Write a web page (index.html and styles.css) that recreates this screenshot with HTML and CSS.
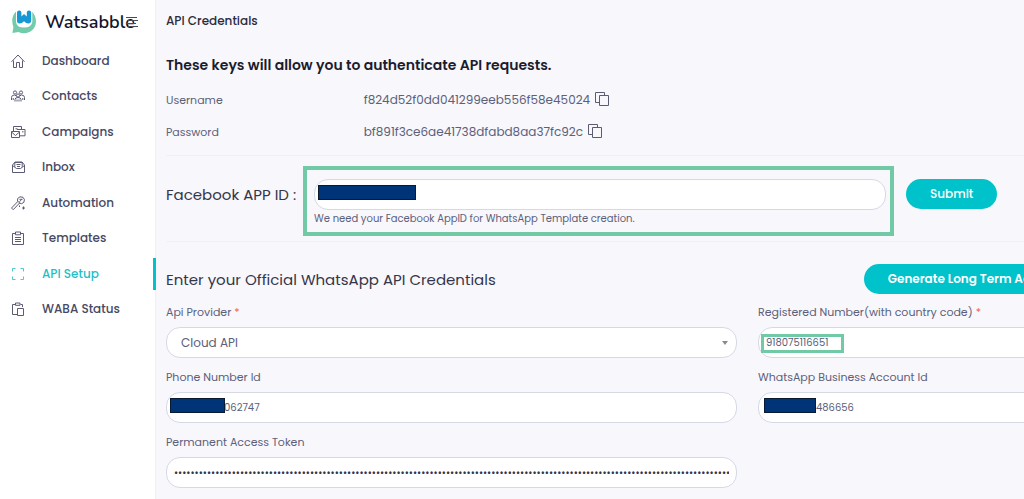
FILE: index.html
```html
<!DOCTYPE html>
<html lang="en">
<head>
    <meta charset="UTF-8">
    <title>API Credentials</title>
    <link rel="stylesheet" href="styles.css">
</head>
<body>
    <aside class="sidebar">
        <div class="brand">
            <svg class="logo" viewBox="0 0 24 24">
                <path d="M3.5 2 Q0 6 0.3 11 Q0.3 14 1.4 17 L0.4 23 L6.5 22 Q9 23.2 12 23.2 C19 23.2 24 18 24 11.5 C24 7 22 4 20.5 2Z" fill="#72cbaa"/>
                <path d="M4 0 H20.3 V12 Q19.5 17.5 12 17.5 T4 12Z" fill="#fff"/>
                <path d="M5 2.6 Q5 .6 7.2 .6 T9.4 2.6 V6.5 L12 4 L14.8 6.5 V2.6 Q14.8 .6 17 .6 T19.2 2.6 V10.5 Q19 13.5 16.5 13.5 Q14 13.5 12 11.3 Q10 13.5 7.5 13.5 Q5 13.5 5 10.5Z" fill="#1897d5"/>
            </svg>
            <span class="brand-name">Watsabble</span>
            <button class="menu-toggle" aria-label="Menu">
                <svg viewBox="0 0 12 10"><path d="M0 .5h11M2 3.5h10M0 6.5h10M2 9.5h10"/></svg>
            </button>
        </div>
        <nav class="menu">
            <a href="#" class="menu-item">
                <svg class="icon" viewBox="0 0 16 16"><path d="M1.5 8.8 8 2l6.5 6.8M3.5 7.5v7h3V9.5h3v5h3v-7"/></svg>
                Dashboard
            </a>
            <a href="#" class="menu-item">
                <svg class="icon" viewBox="0 0 16 16"><circle cx="5" cy="4.5" r="1.6"/><circle cx="11" cy="4.5" r="1.6"/><circle cx="8" cy="7.5" r="1.6"/><path d="M1.5 12V9.5q0-2.5 3-2.5l2 1M14.5 12V9.5q0-2.5-3-2.5l-2 1M5 13.5v-2q0-2 3-2t3 2v2M3.2 12v-2M12.8 12v-2M7 13.5v-2M9 13.5v-2"/></svg>
                Contacts
            </a>
            <a href="#" class="menu-item">
                <svg class="icon" viewBox="0 0 16 16"><path d="M3.5 7V2.5h8V5M7 5.5h8v6.3H9.5M1.5 7.5h8v6h-8zM1.5 8l4 3.5 4-3.5M12 7.8h1.5M5.5 4.8h2"/></svg>
                Campaigns
            </a>
            <a href="#" class="menu-item">
                <svg class="icon" viewBox="0 0 16 16"><path d="M2.5 6v7.5h12V6L12 3H5zM2.5 6.5 6.5 9.5h4l4-3M4.8 7.8V3.5h7.4v4.3M6.5 5.5h4M7 7.5h3"/></svg>
                Inbox
            </a>
            <a href="#" class="menu-item">
                <svg class="icon" viewBox="0 0 16 16"><path d="m1.5 13 6.5-6.7 1.6 1.7L3.2 14.7zM7.5 6.3l.2-2.8L10 1.8l3 .5 1.4 2.2-.5 2.8-2.3 1.4-2.4-.7M9.5 6.8l2.3-2.6M9.5 4.3h3M13.5 11.5v3M12 13h3M9.5 10.5v1.5"/></svg>
                Automation
            </a>
            <a href="#" class="menu-item">
                <svg class="icon" viewBox="0 0 16 16"><path d="M5.5 3.5h-3v11h11v-11h-3M5.5 2h5v2.8h-5zM5 7.5h6M5 9.5h6M5 11.5h6"/></svg>
                Templates
            </a>
            <a href="#" class="menu-item active">
                <svg class="icon" viewBox="0 0 16 16"><path d="M2.5 5.5v-3h3M10.5 2.5h3v3M13.5 10.5v3h-3M5.5 13.5h-3v-3"/></svg>
                API Setup
            </a>
            <a href="#" class="menu-item">
                <svg class="icon" viewBox="0 0 16 16"><path d="M5 3.5H2.5v10H7M10.5 3.5h2V6M5.5 2h4.5v2.3H5.5zM7.5 7.5h6v7h-6z"/></svg>
                WABA Status
            </a>
        </nav>
    </aside>

    <main class="content">
        <div class="page">
            <h1 class="page-title">API Credentials</h1>

            <h2 class="keys-title">These keys will allow you to authenticate API requests.</h2>
            <dl class="keys">
                <div class="key-row">
                    <dt>Username</dt>
                    <dd>
                        f824d52f0dd041299eeb556f58e45024
                        <button class="copy" aria-label="Copy username">
                            <svg viewBox="0 0 14 14"><path d="M4.5 10.5h-4V.5h9V3M4.5 3.5h9v10h-9z"/></svg>
                        </button>
                    </dd>
                </div>
                <div class="key-row">
                    <dt>Password</dt>
                    <dd>
                        bf891f3ce6ae41738dfabd8aa37fc92c
                        <button class="copy" aria-label="Copy password">
                            <svg viewBox="0 0 14 14"><path d="M4.5 10.5h-4V.5h9V3M4.5 3.5h9v10h-9z"/></svg>
                        </button>
                    </dd>
                </div>
            </dl>

            <form class="app-form">
                <label for="app-id" class="app-label">Facebook APP ID :</label>
                <div class="app-box">
                    <div class="control">
                        <input type="text" id="app-id">
                        <span class="mask mask-app"></span>
                    </div>
                    <small>We need your Facebook AppID for WhatsApp Template creation.</small>
                </div>
                <button type="button" class="btn">Submit</button>
            </form>

            <div class="section-head">
                <h3>Enter your Official WhatsApp API Credentials</h3>
                <button type="button" class="btn btn-wide">Generate Long Term Access Token</button>
            </div>

            <form class="credentials">
                <div class="field">
                    <label for="provider">Api Provider <span class="required">*</span></label>
                    <div class="control select">
                        <select id="provider">
                            <option>Cloud API</option>
                        </select>
                    </div>
                </div>
                <div class="field">
                    <label for="number">Registered Number(with country code) <span class="required">*</span></label>
                    <div class="control">
                        <input type="text" id="number" value="918075116651">
                        <span class="highlight"></span>
                    </div>
                </div>
                <div class="field">
                    <label for="phone-id">Phone Number Id</label>
                    <div class="control">
                        <input type="text" id="phone-id" class="masked" value="062747">
                        <span class="mask mask-phone"></span>
                    </div>
                </div>
                <div class="field">
                    <label for="account-id">WhatsApp Business Account Id</label>
                    <div class="control">
                        <input type="text" id="account-id" class="masked" value="486656">
                        <span class="mask mask-account"></span>
                    </div>
                </div>
                <div class="field">
                    <label for="token">Permanent Access Token</label>
                    <div class="control">
                        <input type="password" id="token" value="0000000000000000000000000000000000000000000000000000000000000000000000000000000000000000000000000000000000000000000000000000000000000000000000000000000000000000000000000000000000000000">
                    </div>
                </div>
            </form>
        </div>
    </main>
</body>
</html>
```

FILE: styles.css
```css
* {
    box-sizing: border-box;
}
body {
    margin: 0;
    min-height: 100vh;
    display: flex;
    font-family: Poppins, Inter, sans-serif;
    font-size: 12px;
    color: #5c6079;
    background-color: #f8f7fc;
}
h1, h2, h3, dl, dd {
    margin: 0;
}
button {
    font-family: inherit;
    cursor: pointer;
}
svg {
    display: block;
    fill: none;
    stroke: currentColor;
}

/* sidebar */
.sidebar {
    flex: none;
    width: 156px;
    background-color: #fff;
    border-right: 1px solid #f0f0f4;
}
.brand {
    display: flex;
    align-items: center;
    height: 45px;
    padding: 0 0 2px 12px;
    position: relative;
}
.logo {
    width: 24px;
    height: 24px;
    margin-right: 9px;
    stroke: none;
}
.brand-name {
    font-family: Nunito, "Open Sans", sans-serif;
    font-size: 18px;
    font-weight: 600;
    color: #14142b;
}
.menu-toggle {
    position: absolute;
    right: 17px;
    top: 17px;
    padding: 0;
    border: none;
    background: none;
    color: #4a4a5e;
}
.menu-toggle svg {
    width: 12px;
    height: 10px;
}
.menu {
    display: flex;
    flex-direction: column;
    justify-content: space-between;
    min-height: 280px;
}
.menu-item {
    display: flex;
    align-items: center;
    gap: 16px;
    height: 32px;
    padding-left: 10px;
    margin-right: -1px;
    border-right: 3px solid transparent;
    font-size: 12px;
    font-weight: 500;
    color: #464963;
    text-decoration: none;
}
.menu-item.active {
    color: #1fbfc8;
    border-right-color: #00c2cb;
}
.icon {
    width: 16px;
    height: 16px;
    color: #5a5c74;
}
.active .icon {
    color: #4cc9d1;
}

/* content */
.content {
    flex: 1;
    min-width: 0;
    overflow: hidden;
    padding: 11px 10px;
}
.page {
    min-width: 1163px;
}
.page-title {
    font-size: 12px;
    line-height: 20px;
    font-weight: 500;
    color: #2b2c3c;
}
.keys-title {
    margin-top: 22px;
    font-size: 14px;
    line-height: 24px;
    font-weight: 600;
    color: #1b1c2e;
}
.keys {
    padding: 7px 0;
    border-bottom: 1px solid #f1f0f5;
}
.key-row {
    display: flex;
    align-items: center;
    height: 32px;
}
.key-row dt {
    width: 17%;
    font-size: 11px;
}
.key-row dd {
    display: flex;
    align-items: center;
    gap: 5px;
}
.copy {
    padding: 0 0 3px;
    border: none;
    background: none;
    color: #5a5c74;
}
.copy svg {
    width: 14px;
    height: 14px;
}

/* facebook app id */
.app-form {
    display: flex;
    align-items: center;
    padding: 10px 0 5px;
    border-bottom: 1px solid #f1f0f5;
}
.app-label {
    width: 137px;
    padding-bottom: 14px;
    font-size: 15px;
    color: #34364a;
}
.app-box {
    width: 591px;
    height: 70px;
    padding: 9px 4px 0 7px;
    margin-right: 12px;
    border: 4px solid #72c9a6;
}
.app-box small {
    display: block;
    font-size: 10px;
    line-height: 18px;
}
.btn {
    height: 30px;
    padding: 0 24px;
    border: none;
    border-radius: 15px;
    background-color: #00c2cb;
    color: #fff;
    font-size: 12px;
    font-weight: 500;
}
.app-form .btn {
    margin-bottom: 14px;
}
.btn-wide {
    font-weight: 600;
    text-align: left;
}

/* credentials */
.section-head {
    display: grid;
    grid-template-columns: 3fr 2fr;
    align-items: center;
    margin: 22px 0 8px;
}
.section-head h3 {
    font-size: 15px;
    font-weight: 400;
    color: #34364a;
}
.credentials {
    display: grid;
    grid-template-columns: 1fr 1fr;
    gap: 9px 21px;
}
.field label {
    display: block;
    margin-bottom: 5px;
    font-size: 11px;
    line-height: 20px;
}
.required {
    color: #f0624d;
}
.control {
    position: relative;
}
input, select {
    display: block;
    width: 100%;
    height: 31px;
    padding: 0 7px;
    border: 1px solid #d5d9e5;
    border-radius: 14px;
    background-color: #fff;
    font-family: inherit;
    font-size: 10px;
    color: #5c6079;
}
select {
    appearance: none;
    padding: 0 14px;
    font-size: 12px;
}
.select::after {
    content: "";
    position: absolute;
    right: 9px;
    top: 14px;
    border: 3px solid transparent;
    border-top: 4px solid #8a8a92;
    border-bottom: none;
}
input.masked {
    padding-left: 57px;
}
input[type="password"] {
    color: #34364a;
}
.mask {
    position: absolute;
    top: 6px;
    left: 4px;
    height: 15px;
    background-color: #003478;
    border: 1px solid #0a1a33;
}
.mask-app {
    width: 98px;
}
.mask-phone {
    width: 55px;
}
.mask-account {
    left: 6px;
    width: 52px;
}
.highlight {
    position: absolute;
    top: 7px;
    left: 3px;
    width: 83px;
    height: 19px;
    border: 3px solid #72c9a6;
}
```
